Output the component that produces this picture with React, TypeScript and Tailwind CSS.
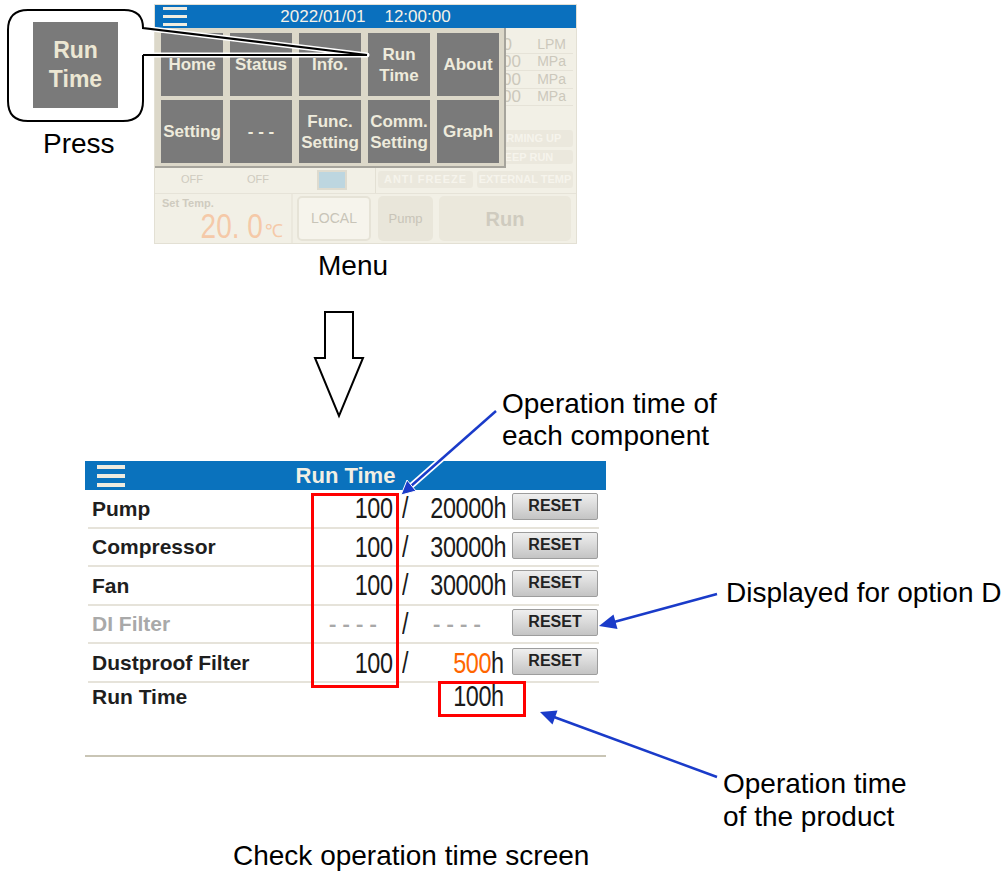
import React from "react";

const SANS = "font-['Liberation_Sans',Arial,sans-serif]";

const MENU = [
  ["Home"],
  ["Status"],
  ["Info."],
  ["Run", "Time"],
  ["About"],
  ["Setting"],
  ["- - -"],
  ["Func.", "Setting"],
  ["Comm.", "Setting"],
  ["Graph"],
];

const READINGS = [
  { v: "0", u: "LPM", w: "w-[35px]" },
  { v: "00", u: "MPa", w: "w-[44px]" },
  { v: "00", u: "MPa", w: "w-[44px]" },
  { v: "00", u: "MPa", w: "w-[44px]" },
];

type Row = { name: string; used: string; limit: string; orange?: boolean; off?: boolean };

const ROWS: Row[] = [
  { name: "Pump", used: "100", limit: "20000" },
  { name: "Compressor", used: "100", limit: "30000" },
  { name: "Fan", used: "100", limit: "30000" },
  { name: "DI Filter", used: "- - - -", limit: "- - - -", off: true },
  { name: "Dustproof Filter", used: "100", limit: "500", orange: true },
];

// thin, condensed digits of the panel display
function Num({ children, center }: { children: React.ReactNode; center?: boolean }) {
  return (
    <span
      className={`inline-block whitespace-nowrap text-[30px] leading-none tracking-[-0.5px] ${
        center ? "origin-center" : "origin-right"
      } scale-x-[0.78]`}
    >
      {children}
    </span>
  );
}

function MenuScreen() {
  return (
    <div className="absolute left-[154px] top-[4px] flex h-[240px] w-[423px] flex-col border border-[#e3e0d4] bg-[#f2f0e6]">
      {/* title bar */}
      <div className="grid h-[23px] shrink-0 grid-cols-[1fr_auto_1fr] items-center bg-[#0a70be]">
        <div className="pl-[8px]">
          <div className="flex w-[24px] flex-col gap-[5px]">
            <span className="h-[3px] bg-[#f1ede0]" />
            <span className="h-[3px] bg-[#f1ede0]" />
            <span className="h-[3px] bg-[#f1ede0]" />
          </div>
        </div>
        <div className={`${SANS} text-[17px] leading-none text-[#f5f2e8]`}>
          <span>2022/01/01</span>
          <span className="ml-[19px]">12:00:00</span>
        </div>
        <div />
      </div>

      {/* faded home screen behind the menu */}
      <div className={`relative flex flex-1 flex-col ${SANS}`}>
        <div className="flex h-[138px] justify-end pr-[3px]">
          <div className="flex w-[96px] flex-col pt-[8px]">
            {READINGS.map((r, i) => (
              <div key={i} className="flex h-[17.5px] items-center border-b border-[#e6e3d8] pr-[7px] text-[14px] text-[#ccc8bc]">
                <span className={`${r.w} text-right text-[17px]`}>{r.v}</span>
                <span className="ml-auto">{r.u}</span>
              </div>
            ))}
            <div className="mt-[24px] flex h-[17px] items-center justify-center whitespace-nowrap rounded-[3px] bg-[#ebe8dd] text-[11px] font-bold text-[#f6f4ec]">
              WARMING UP
            </div>
            <div className="mt-[3px] flex h-[14px] items-center justify-center whitespace-nowrap rounded-[3px] bg-[#ebe8dd] text-[11px] font-bold text-[#f6f4ec]">
              KEEP RUN
            </div>
          </div>
        </div>

        <div className="flex h-[27px] items-center text-[11px] text-[#cfcbbf]">
          <span className="ml-[15px] w-[44px] text-center">OFF</span>
          <span className="ml-[22px] w-[44px] text-center">OFF</span>
          <span className="ml-[37px] h-[20px] w-[30px] border-2 border-[#dedbcf] bg-[#bdd6e0]" />
          <span className="ml-[28px] h-full w-px bg-[#e3e0d4]" />
          <span className="ml-[2px] flex h-[17px] w-[95px] items-center justify-center whitespace-nowrap rounded-[3px] bg-[#ebe8dd] text-[11px] font-bold tracking-[1px] text-[#f6f4ec]">
            ANTI FREEZE
          </span>
          <span className="ml-[4px] flex h-[17px] w-[96px] items-center justify-center whitespace-nowrap rounded-[3px] bg-[#ebe8dd] text-[11px] font-bold text-[#f6f4ec]">
            EXTERNAL TEMP
          </span>
        </div>

        <div className="flex flex-1 items-stretch border-t border-[#e6e3d8]">
          <div className="flex w-[138px] flex-col border-r-2 border-[#ebe8dd] pl-[7px] pr-[8px] pt-[3px]">
            <span className="text-[11px] font-bold leading-[12px] text-[#cfcbbf]">Set Temp.</span>
            <div className="flex items-end justify-end">
              <span className="inline-block origin-right scale-x-[0.8] whitespace-nowrap text-[35px] leading-[34px] text-[#f5c9a8]">
                20. 0
              </span>
              <span className="mb-[3px] ml-[2px] text-[18px] leading-none text-[#f5c9a8]">℃</span>
            </div>
          </div>
          <div className="my-[2px] ml-[4px] flex w-[74px] items-center justify-center rounded-[5px] border-2 border-[#e6e3d7] bg-[#f6f4ec] text-[14px] text-[#c8c4b8]">
            LOCAL
          </div>
          <div className="my-[2px] ml-[7px] flex w-[55px] items-center justify-center rounded-[5px] bg-[#e9e6da] text-[13px] text-[#c8c4b8]">
            Pump
          </div>
          <div className="my-[2px] ml-[6px] flex w-[132px] items-center justify-center rounded-[5px] bg-[#ebe8dc] text-[20px] font-bold text-[#cfcbbf]">
            Run
          </div>
        </div>

        {/* the menu itself */}
        <div className="absolute left-0 top-0 grid h-[140px] w-[351px] grid-cols-[repeat(5,62px)] grid-rows-[63px_63px] gap-x-[7px] gap-y-[4px] border-b-2 border-r-2 border-[#a6a49c] bg-[#dcd8c9] pl-[6px] pt-[5px]">
          {MENU.map((m, i) => (
            <div key={i} className="flex flex-col items-center justify-center bg-[#7a7a7a] text-center text-[17px] font-bold leading-[21px] text-[#eeebdc]">
              {m.map((l) => (
                <span key={l}>{l}</span>
              ))}
            </div>
          ))}
        </div>
      </div>
    </div>
  );
}

function RunTimeScreen() {
  return (
    <div className={`absolute left-[85px] top-[461px] flex h-[296px] w-[521px] flex-col border-b-2 border-[#c9c5b5] bg-white ${SANS}`}>
      <div className="grid h-[29px] shrink-0 grid-cols-[1fr_auto_1fr] items-center bg-[#0a72bd]">
        <div className="pl-[12px]">
          <div className="flex w-[28px] flex-col gap-[5px]">
            <span className="h-[4px] bg-[#efebdf]" />
            <span className="h-[4px] bg-[#efebdf]" />
            <span className="h-[4px] bg-[#efebdf]" />
          </div>
        </div>
        <span className="text-[22px] font-bold leading-none text-[#f2efe4]">Run Time</span>
        <div />
      </div>

      <div className="ml-[3px] mr-[7px] flex flex-col">
        {ROWS.map((r) => (
          <div key={r.name} className="flex h-[38.6px] items-center border-b-2 border-[#e6e3da] pl-[4px]">
            <span className={`w-[221px] text-[21px] font-bold ${r.off ? "text-[#a9a9a9]" : "text-[#1e1e1e]"}`}>
              {r.name}
            </span>
            <span className={`w-[80px] pt-[2px] ${r.off ? "text-center text-[#a8a8a8]" : "text-right text-[#1a1a1a]"}`}>
              <Num center={r.off}>{r.used}</Num>
            </span>
            <span className="ml-[9px] w-[7px] pt-[2px] text-[#1a1a1a]">
              <span className="inline-block origin-left scale-x-[0.78] text-[30px] leading-none">/</span>
            </span>
            <span className={`w-[95px] pt-[2px] ${r.off ? "text-center text-[#a8a8a8]" : "text-right text-[#1a1a1a]"}`}>
              <Num center={r.off}>
                {r.off ? (
                  r.limit
                ) : (
                  <>
                    <span className={r.orange ? "text-[#ff6600]" : ""}>{r.limit}</span>h
                  </>
                )}
              </Num>
            </span>
            <button className="mb-[3px] ml-[8px] flex h-[27px] w-[86px] items-start justify-center rounded-[2px] border border-[#9d9d9d] bg-gradient-to-b from-[#efefef] to-[#c4c4c4] pt-[3px] text-[16px] font-bold leading-[18px] text-[#222]">
              RESET
            </button>
          </div>
        ))}
        <div className="flex h-[27px] items-center pl-[4px]">
          <span className="w-[221px] text-[21px] font-bold text-[#1e1e1e]">Run Time</span>
          <span className="w-[80px]" />
          <span className="ml-[9px] w-[7px]" />
          <span className="w-[95px] pt-[2px] text-right text-[#1a1a1a]">
            <Num>100h</Num>
          </span>
        </div>
      </div>
    </div>
  );
}

function Overlay() {
  const blue = "#1a3bc9";
  return (
    <svg className="pointer-events-none absolute left-0 top-0" width="1006" height="876" viewBox="0 0 1006 876">
      {/* speech bubble around the pressed key */}
      <path d="M143 28 L367 55 L143 55" fill="none" stroke="#fff" strokeWidth="5" strokeLinejoin="round" />
      <path
        d="M143 55 L143 101 Q143 121 123 121 L28 121 Q8 121 8 101 L8 30 Q8 10 28 10 L124 10 Q143 10 143 28 L367 55 L143 55"
        fill="none"
        stroke="#000"
        strokeWidth="2"
      />

      {/* big down arrow */}
      <polygon
        points="325,312 353,312 353,358 363,358 339,416 315,358 325,358"
        fill="#fff"
        stroke="#000"
        strokeWidth="2"
      />

      {/* arrow: operation time of each component */}
      <line x1="496" y1="411" x2="411" y2="486" stroke="#fff" strokeWidth="6" />
      <line x1="496" y1="411" x2="411" y2="486" stroke={blue} strokeWidth="2.5" />
      <polygon points="401,495 416,491 407,480" fill={blue} stroke="#fff" strokeWidth="1" />

      {/* arrow: displayed for option D */}
      <line x1="717" y1="594" x2="614" y2="622" stroke={blue} strokeWidth="2.5" />
      <polygon points="599,626 617.5,629 613.5,614.5" fill={blue} />

      {/* arrow: operation time of the product */}
      <line x1="717" y1="777" x2="554" y2="717" stroke={blue} strokeWidth="2.5" />
      <polygon points="540,712 552.5,724.5 557.5,710.5" fill={blue} />
    </svg>
  );
}

export default function App() {
  return (
    <div className={`relative h-[876px] w-[1006px] overflow-hidden bg-white text-black ${SANS}`}>
      <MenuScreen />

      {/* pressed key, enlarged */}
      <div className="absolute left-[33px] top-[22px] flex h-[86px] w-[85px] flex-col items-center justify-center bg-[#7a7a7a] text-[23px] font-bold leading-[29px] text-[#ece7d3]">
        <span>Run</span>
        <span>Time</span>
      </div>

      <RunTimeScreen />

      {/* highlight boxes */}
      <div className="absolute left-[311px] top-[493px] h-[195px] w-[88px] border-[3px] border-[#ff0000]" />
      <div className="absolute left-[438px] top-[681px] h-[36px] w-[88px] border-[3px] border-[#ff0000]" />

      <Overlay />

      {/* captions */}
      <div className="absolute left-[43px] top-[128px] text-[28px] leading-[32px]">Press</div>
      <div className="absolute left-[318px] top-[250px] text-[28px] leading-[32px]">Menu</div>
      <div className="absolute left-[502px] top-[388px] text-[28px] leading-[32px]">
        Operation time of
        <br />
        each component
      </div>
      <div className="absolute left-[726px] top-[577px] text-[28px] leading-[32px]">Displayed for option D</div>
      <div className="absolute left-[723px] top-[767px] text-[28px] leading-[33px]">
        Operation time
        <br />
        of the product
      </div>
      <div className="absolute left-[233px] top-[840px] text-[28px] leading-[32px]">Check operation time screen</div>
    </div>
  );
}
